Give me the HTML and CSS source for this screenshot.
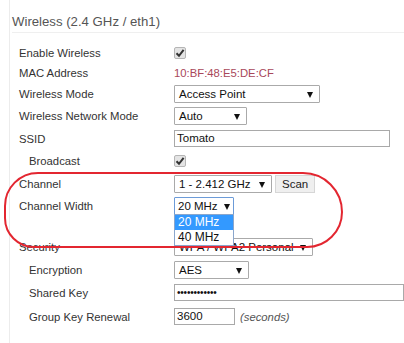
FILE: index.html
```html
<!DOCTYPE html>
<html lang="en">
<head>
    <meta charset="UTF-8">
    <meta name="viewport" content="width=device-width, initial-scale=1.0">
    <title>Wireless</title>
    <link rel="stylesheet" href="styles.css">
</head>
<body>
    <div class="page">
        <section class="section">
            <h2 class="section-title">Wireless (2.4 GHz / eth1)</h2>

            <div class="fields">
                <div class="row row-short">
                    <span class="label">Enable Wireless</span>
                    <span class="check"><svg width="10" height="10" viewBox="0 0 10 10"><path d="M1.5 5.2 L4 7.8 L8.6 1.8" fill="none" stroke="#333" stroke-width="2"/></svg></span>
                </div>
                <div class="row row-short">
                    <span class="label">MAC Address</span>
                    <span class="mac">10:BF:48:E5:DE:CF</span>
                </div>
                <div class="row">
                    <span class="label">Wireless Mode</span>
                    <span class="select w-146">Access Point</span>
                </div>
                <div class="row">
                    <span class="label">Wireless Network Mode</span>
                    <span class="select w-73">Auto</span>
                </div>
                <div class="row row-23">
                    <span class="label">SSID</span>
                    <span class="input w-216">Tomato</span>
                </div>
                <div class="row">
                    <span class="label sub">Broadcast</span>
                    <span class="check"><svg width="10" height="10" viewBox="0 0 10 10"><path d="M1.5 5.2 L4 7.8 L8.6 1.8" fill="none" stroke="#333" stroke-width="2"/></svg></span>
                </div>
                <div class="row row-23">
                    <span class="label">Channel</span>
                    <span class="select w-98">1 - 2.412 GHz</span>
                    <span class="button">Scan</span>
                </div>
                <div class="row">
                    <span class="label">Channel Width</span>
                    <span class="dropdown">
                        <span class="select w-60 focused">20 MHz</span>
                        <span class="options">
                            <span class="option selected">20 MHz</span>
                            <span class="option">40 MHz</span>
                        </span>
                    </span>
                </div>
                <div class="spacer"></div>
                <div class="row">
                    <span class="label">Security</span>
                    <span class="select w-139">WPA / WPA2 Personal</span>
                </div>
                <div class="row row-23">
                    <span class="label sub">Encryption</span>
                    <span class="select w-75">AES</span>
                </div>
                <div class="row row-23">
                    <span class="label sub">Shared Key</span>
                    <span class="input w-240 dots">&bull;&bull;&bull;&bull;&bull;&bull;&bull;&bull;&bull;&bull;&bull;&bull;</span>
                </div>
                <div class="row row-tall">
                    <span class="label sub">Group Key Renewal</span>
                    <span class="input w-61">3600</span>
                    <span class="note">(seconds)</span>
                </div>
            </div>

            <!-- red marker drawn over the channel rows -->
            <div class="marker"></div>
        </section>
    </div>
</body>
</html>
```

FILE: styles.css
```css
* {
    margin: 0;
    padding: 0;
    box-sizing: border-box;
}

body {
    font-family: "Liberation Sans", Arial, sans-serif;
    font-size: 11.3px;
    color: #333;
    background-color: #fff;
    overflow: hidden;
}

.page {
    margin-left: 9px;
    border-left: 1px solid #ececec;
    min-height: 343px;
}

.section {
    position: relative;
    padding-left: 2px;
}

.section-title {
    font-size: 13.2px;
    font-weight: normal;
    color: #555;
    height: 33px;
    padding-top: 14px;
    border-bottom: 1px solid #efefef;
}

.fields {
    padding-top: 10px;
    padding-left: 7px;
}

.row {
    display: flex;
    align-items: center;
    height: 22px;
}

.row-short {
    height: 20px;
}

.row-23 {
    height: 23px;
}

.row-tall {
    height: 25px;
}

.spacer {
    height: 19px;
}

.label {
    width: 155px;
    flex-shrink: 0;
}

.label.sub {
    padding-left: 10px;
}

.check {
    width: 12px;
    height: 12px;
    border: 1px solid #b5b5b5;
    border-radius: 2px;
    background-color: #e4e4e4;
    display: flex;
    align-items: center;
    justify-content: center;
}

.mac {
    color: #a9475a;
}

.select {
    display: block;
    position: relative;
    height: 18px;
    line-height: 16px;
    border: 1px solid #aaa;
    border-radius: 1px;
    background-color: #fff;
    padding-left: 4px;
    color: #111;
    font-size: 11.5px;
    white-space: nowrap;
    overflow: hidden;
}

.select::after {
    content: "";
    position: absolute;
    right: 6px;
    top: 6px;
    border-left: 3.5px solid transparent;
    border-right: 3.5px solid transparent;
    border-top: 6px solid #111;
}

.select.focused {
    border-color: #6c9bd8;
    padding-left: 3px;
}

.select.focused::after {
    right: 3px;
}

.input {
    height: 17px;
    line-height: 15px;
    border: 1px solid #a9a9a9;
    background-color: #fff;
    padding-left: 2px;
    color: #111;
    font-size: 11.5px;
    white-space: nowrap;
}

.input.dots {
    font-size: 10px;
    letter-spacing: -0.2px;
}

.button {
    margin-left: 3px;
    height: 18px;
    line-height: 16px;
    padding: 0 6px;
    border: 1px solid #d6d6d6;
    background-color: #efefef;
    color: #222;
    font-size: 11.5px;
}

.note {
    margin-left: 5px;
    font-style: italic;
    color: #555;
}

.w-60 { width: 60px; }
.w-61 { width: 61px; }
.w-73 { width: 73px; }
.w-75 { width: 75px; }
.w-98 { width: 98px; }
.w-139 { width: 139px; }
.w-146 { width: 146px; }
.w-216 { width: 216px; }
.w-240 { width: 240px; }

.dropdown {
    position: relative;
    display: block;
}

.options {
    position: absolute;
    left: 0;
    top: 17px;
    width: 60px;
    z-index: 2;
    border: 1px solid #8aa6cc;
    background-color: #fff;
    display: flex;
    flex-direction: column;
}

.option {
    height: 15px;
    line-height: 15px;
    padding-left: 3px;
    font-size: 12px;
    color: #111;
}

.option.selected {
    background-color: #3399ff;
    color: #fff;
}

.marker {
    position: absolute;
    left: -6px;
    top: 172px;
    width: 339px;
    height: 76px;
    border: 2px solid #e32630;
    border-radius: 34px 40px 36px 30px;
    z-index: 3;
    pointer-events: none;
}
```
